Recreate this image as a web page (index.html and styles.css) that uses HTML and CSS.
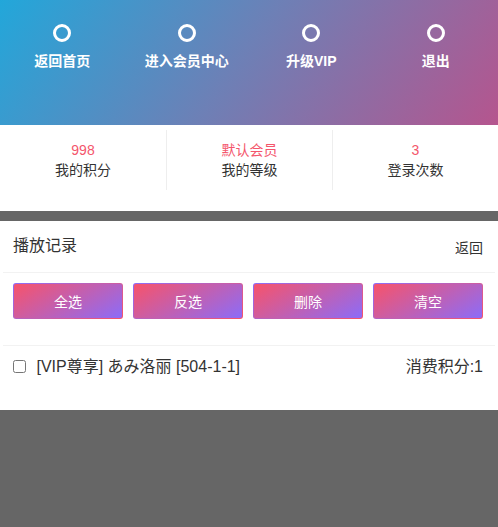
FILE: index.html
```html
<!DOCTYPE html>
<html lang="zh-CN">
<head>
    <meta charset="UTF-8">
    <meta name="viewport" content="width=device-width, initial-scale=1.0">
    <title>会员中心</title>
    <link rel="stylesheet" href="styles.css">
</head>
<body>
    <div class="top">
        <a class="top-item" href="#"><span class="ring"></span>返回首页</a>
        <a class="top-item" href="#"><span class="ring"></span>进入会员中心</a>
        <a class="top-item" href="#"><span class="ring"></span>升级VIP</a>
        <a class="top-item" href="#"><span class="ring"></span>退出</a>
    </div>

    <div class="stats">
        <div class="stat">
            <div class="stat-value">998</div>
            <div class="stat-label">我的积分</div>
        </div>
        <div class="stat">
            <div class="stat-value">默认会员</div>
            <div class="stat-label">我的等级</div>
        </div>
        <div class="stat">
            <div class="stat-value">3</div>
            <div class="stat-label">登录次数</div>
        </div>
    </div>

    <div class="panel">
        <div class="panel-head">
            <span class="panel-title">播放记录</span>
            <a class="panel-back" href="#">返回</a>
        </div>
        <div class="actions">
            <button class="btn">全选</button>
            <button class="btn">反选</button>
            <button class="btn">删除</button>
            <button class="btn">清空</button>
        </div>
        <ul class="records">
            <li class="record">
                <label><input type="checkbox"> [VIP尊享] あみ洛丽 [504-1-1]</label>
                <span class="cost">消费积分:1</span>
            </li>
        </ul>
    </div>
</body>
</html>
```

FILE: styles.css
```css
body {
    margin: 0;
    background-color: #666;
    font-family: "Liberation Sans", "Noto Sans CJK SC", sans-serif;
    color: #333;
}
a {
    text-decoration: none;
    color: inherit;
}
.top {
    height: 125px;
    display: grid;
    grid-template-columns: repeat(4, 1fr);
    background: linear-gradient(125deg, #22a7da 0%, #6d80b6 48%, #b5558e 100%);
}
.top-item {
    display: flex;
    flex-direction: column;
    align-items: center;
    padding-top: 24px;
    color: #fff;
    font-size: 14px;
    font-weight: bold;
    line-height: 18px;
}
.ring {
    width: 12px;
    height: 12px;
    border: 3px solid #fff;
    border-radius: 50%;
    margin-bottom: 10px;
}
.stats {
    display: grid;
    grid-template-columns: repeat(3, 1fr);
    background-color: #fff;
    padding: 5px 0 21px;
}
.stat {
    text-align: center;
    padding: 10px 0;
    border-left: 1px solid #eee;
}
.stat:first-child {
    border-left: none;
}
.stat-value {
    color: #f4566c;
    font-size: 14px;
    line-height: 20px;
}
.stat-label {
    font-size: 14px;
    line-height: 20px;
}
.panel {
    margin-top: 10px;
    background-color: #fff;
    padding: 0 3px 32px;
}
.panel-head {
    display: flex;
    justify-content: space-between;
    align-items: flex-end;
    padding: 13px 12px 14px 10px;
    border-bottom: 1px solid #f2f2f2;
}
.panel-title {
    font-size: 16px;
    line-height: 24px;
}
.panel-back {
    font-size: 14px;
    line-height: 20px;
}
.actions {
    display: grid;
    grid-template-columns: repeat(4, 1fr);
    gap: 10px;
    padding: 10px 12px 26px 10px;
    border-bottom: 1px solid #f2f2f2;
}
.btn {
    height: 36px;
    border: 1px solid transparent;
    border-radius: 3px;
    background: linear-gradient(150deg, #f7536a, #8c6cf8) padding-box,
                linear-gradient(150deg, #8c6cf8, #f7536a) border-box;
    color: #fff;
    font-family: inherit;
    font-size: 14px;
    cursor: pointer;
}
.records {
    list-style: none;
    margin: 0;
    padding: 0;
}
.record {
    display: flex;
    justify-content: space-between;
    align-items: center;
    padding: 10px 12px 0 10px;
    font-size: 16px;
    line-height: 22px;
}
.record input {
    width: 13px;
    height: 13px;
    margin: 0 6px 0 0;
    vertical-align: -1px;
}
```
